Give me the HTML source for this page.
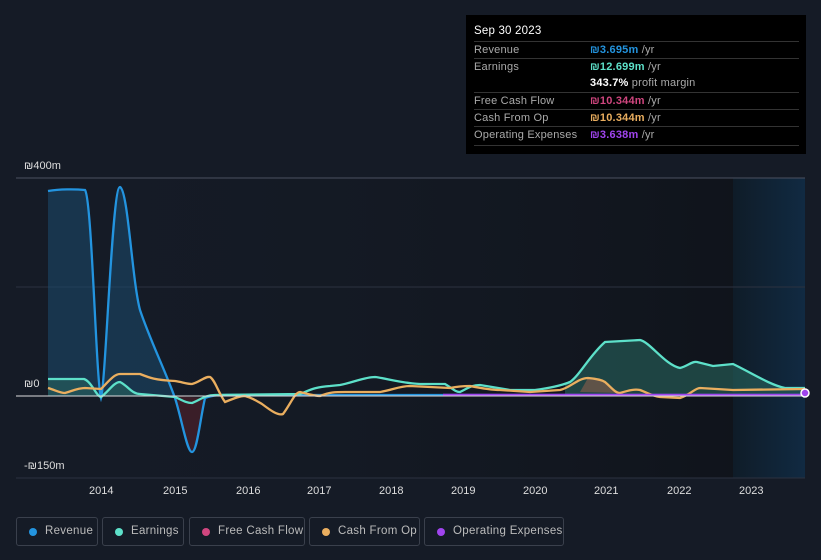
<!DOCTYPE html>
<html><head><meta charset="utf-8"><style>
html,body{margin:0;background:#151b26;width:821px;height:560px;overflow:hidden;font-family:"Liberation Sans",sans-serif;position:relative}
.tip{position:absolute;left:466px;top:15px;width:340px;height:139px;background:#000;color:#aaa;font-size:11px;letter-spacing:.2px}
.tip .h{color:#fff;font-size:11.5px;position:absolute;left:8px;top:10px}
.row{position:absolute;left:8px;width:325px;border-top:1px solid #333;height:17px;line-height:17px;white-space:nowrap}
.row span{position:absolute;left:116px;font-weight:bold}
.row i{font-style:normal;color:#aaa;font-weight:normal}
.lg{position:absolute;top:517px;height:29px;border:1px solid #3a404c;border-radius:3px;color:#bbb;font-size:11.5px;line-height:27px;box-sizing:border-box;white-space:nowrap;letter-spacing:.3px}
.lg b{position:absolute;left:12px;top:10px;width:8px;height:8px;border-radius:50%}
.lg span{position:absolute;left:28px}
.ax{position:absolute;color:#ddd;font-size:11px}
</style></head><body>
<svg width="821" height="560" style="position:absolute;left:0;top:0">
<defs>
<linearGradient id="dk" x1="0" x2="1"><stop offset="0" stop-color="#151b26" stop-opacity="0"/><stop offset="1" stop-color="#0c0f14" stop-opacity=".6"/></linearGradient>
<linearGradient id="hl" x1="0" x2="1"><stop offset="0" stop-color="#0f1c28"/><stop offset="1" stop-color="#112a42"/></linearGradient>
</defs>
<rect x="16" y="178" width="717" height="300" fill="url(#dk)"/>
<rect x="733" y="178" width="72" height="300" fill="url(#hl)"/>
<line x1="16" y1="178" x2="805" y2="178" stroke="#4a5060"/>
<line x1="16" y1="287" x2="805" y2="287" stroke="#2c3240"/>
<line x1="16" y1="478" x2="805" y2="478" stroke="#2c3240"/>
<path d="M48,191 C60,189 75,189 85,190 C92,200 96,380 101,398 C106,380 112,187 120,187 C128,190 132,280 140,310 C150,340 165,370 175,398 L175,396 L48,396Z" fill="#1b4a6e" fill-opacity=".55"/>
<path d="M175,396 C182,420 187,452 192,452 C197,452 200,420 205,398Z" fill="#4a1f2a" fill-opacity=".7"/>
<path d="M48,379 L84,379 C92,382 96,396 101,397 C108,392 114,382 120,382 C128,386 132,394 140,394 L175,397 L175,396 L48,396Z" fill="#2a6b62" fill-opacity=".5"/>
<path d="M565,385 C575,380 590,355 605,342 L640,340 C650,342 665,365 680,368 C688,366 692,361 697,362 L713,366 L733,364 C750,372 770,385 785,388 L805,388 L805,396 L565,396Z" fill="#2a6b62" fill-opacity=".55"/>
<path d="M580,392 L588,378 L605,382 L620,393Z" fill="#7a5a4a" fill-opacity=".7"/>
<path d="M48,191 C60,189 75,189 85,190 C92,200 96,380 101,398 C106,380 112,187 120,187 C128,190 132,280 140,310 C150,340 165,370 175,398 C182,420 187,452 192,452 C197,452 200,420 205,398 C215,394 225,395 240,395 L805,395" fill="none" stroke="#2394df" stroke-width="2.3"/>
<path d="M48,379 L84,379 C92,382 96,396 101,397 C108,392 114,382 120,382 C128,386 132,394 140,394 L175,397 C182,400 186,403 192,403 C200,400 205,395 215,395 L300,394 C310,390 315,387 330,386 L340,385 C355,382 365,377 375,377 C385,378 400,383 420,384 L445,384 C452,388 455,392 460,392 C468,388 472,385 480,385 L510,390 L535,390 C550,388 560,386 570,382 C580,375 590,355 605,342 L640,340 C650,342 665,365 680,368 C688,366 692,361 697,362 L713,366 L733,364 C750,372 770,385 785,388 L805,388" fill="none" stroke="#5de0c9" stroke-width="2.3"/>
<path d="M48,388 C55,390 60,393 65,393 C72,391 78,388 85,388 L101,389 C108,382 114,374 120,374 L140,374 C150,378 155,380 175,381 C182,382 187,384 192,384 C200,382 205,376 210,377 C215,380 218,392 225,402 C235,398 240,396 245,396 C252,398 255,400 262,404 C270,410 278,416 283,414 C290,405 295,392 300,392 C308,394 315,396 320,396 C330,392 335,392 345,392 L380,392 C392,390 400,386 410,386 L450,388 C460,386 465,386 470,386 C480,388 490,390 500,390 L530,392 L560,390 C570,388 578,378 588,378 C598,379 602,380 605,382 C612,388 615,393 620,393 C630,390 635,389 640,390 C648,393 652,396 660,397 L680,398 C690,395 695,388 700,388 L733,390 L805,389" fill="none" stroke="#eaae5f" stroke-width="2.3"/>
<line x1="443" y1="395" x2="805" y2="395" stroke="#a044ee" stroke-width="2.5"/>
<line x1="16" y1="396" x2="805" y2="396" stroke="#ddd" stroke-width="1"/>
<circle cx="805" cy="393" r="4" fill="#a044ee" stroke="#fff" stroke-width="1.5"/>
</svg>
<div class="ax" style="left:24px;top:160px">₪400m</div>
<div class="ax" style="left:24px;top:378px">₪0</div>
<div class="ax" style="left:24px;top:460px">-₪150m</div>
<div class="ax" style="left:89px;top:485px">2014</div>
<div class="ax" style="left:163px;top:485px">2015</div>
<div class="ax" style="left:236px;top:485px">2016</div>
<div class="ax" style="left:307px;top:485px">2017</div>
<div class="ax" style="left:379px;top:485px">2018</div>
<div class="ax" style="left:451px;top:485px">2019</div>
<div class="ax" style="left:523px;top:485px">2020</div>
<div class="ax" style="left:594px;top:485px">2021</div>
<div class="ax" style="left:667px;top:485px">2022</div>
<div class="ax" style="left:739px;top:485px">2023</div>
<div class="tip">
<div class="h">Sep 30 2023</div>
<div class="row" style="top:26px">Revenue<span style="color:#2394df">₪3.695m <i>/yr</i></span></div>
<div class="row" style="top:43px">Earnings<span style="color:#5de0c9">₪12.699m <i>/yr</i></span></div>
<div class="row" style="top:60px;border:0"><span style="color:#fff">343.7% <i>profit margin</i></span></div>
<div class="row" style="top:77px">Free Cash Flow<span style="color:#d0467f">₪10.344m <i>/yr</i></span></div>
<div class="row" style="top:94px">Cash From Op<span style="color:#eaae5f">₪10.344m <i>/yr</i></span></div>
<div class="row" style="top:111px">Operating Expenses<span style="color:#a044ee">₪3.638m <i>/yr</i></span></div>
<div class="row" style="top:130px;height:0"></div>
</div>
<div class="lg" style="left:16px;width:82px"><b style="background:#2394df"></b><span>Revenue</span></div>
<div class="lg" style="left:102px;width:82px"><b style="background:#5de0c9"></b><span>Earnings</span></div>
<div class="lg" style="left:189px;width:116px"><b style="background:#d0467f"></b><span>Free Cash Flow</span></div>
<div class="lg" style="left:309px;width:111px"><b style="background:#eaae5f"></b><span>Cash From Op</span></div>
<div class="lg" style="left:424px;width:140px"><b style="background:#a044ee"></b><span>Operating Expenses</span></div>
</body></html>
